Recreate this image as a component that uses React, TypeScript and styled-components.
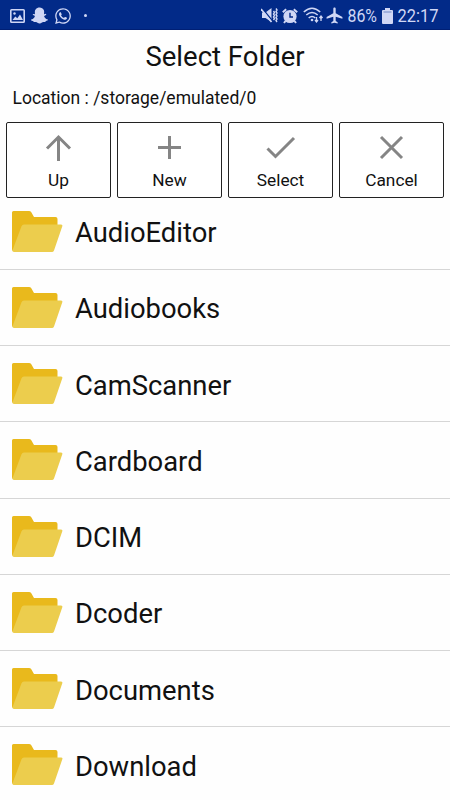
import React from 'react';
import styled, { createGlobalStyle } from 'styled-components';
import { FaSnapchatGhost, FaWhatsapp } from 'react-icons/fa';
import { MdAirplanemodeActive } from 'react-icons/md';

const GlobalStyle = createGlobalStyle`
  * { box-sizing: border-box; }
  body { margin: 0; background: #fff; }
`;

const Screen = styled.div`
  display: flex;
  flex-direction: column;
  width: 450px;
  height: 800px;
  overflow: hidden;
  background: #fefefe;
  color: #111;
  font-family: Roboto, sans-serif;
`;

const StatusBar = styled.header`
  display: flex;
  align-items: center;
  flex: none;
  height: 30px;
  padding: 2px 11px 0 10px;
  background: #022a88;
  border-bottom: 1px solid #001f75;
  color: #d0d7f5;
  svg { display: block; flex: none; }
`;

const Notifications = styled.div`
  display: flex;
  align-items: center;
  gap: 6px;
`;

const Dot = styled.span`
  width: 3px;
  height: 3px;
  margin-left: 6px;
  border-radius: 50%;
  background: currentColor;
`;

const SystemIcons = styled.div`
  display: flex;
  align-items: center;
  margin-left: auto;
`;

const StatusText = styled.svg`
  overflow: visible;
  fill: currentColor;
  font: 400 19px Roboto, sans-serif;
`;

const Title = styled.h1`
  flex: none;
  margin: 0;
  height: 53px;
  line-height: 53px;
  font-size: 27.5px;
  font-weight: 400;
  text-align: center;
`;

const Location = styled.p`
  flex: none;
  margin: 0;
  height: 39px;
  padding-left: 12.5px;
  line-height: 30px;
  font-size: 17.5px;
`;

const Toolbar = styled.nav`
  display: grid;
  grid-template-columns: repeat(4, 1fr);
  gap: 6px;
  flex: none;
  height: 76px;
  padding: 0 6px;
`;

const ToolButton = styled.button`
  display: flex;
  flex-direction: column;
  align-items: center;
  padding: 9px 0 0;
  border: 1px solid #222;
  border-radius: 2px;
  background: #fff;
  color: #111;
  font: 400 17.300px/20px Roboto, sans-serif;
  svg { display: block; margin-bottom: 7px; }
`;

const FolderViewport = styled.main`
  flex: 1;
  min-height: 0;
  overflow: hidden;
`;

const FolderList = styled.ul`
  margin: -4.5px 0 0;
  padding: 0;
  list-style: none;
`;

const FolderRow = styled.li`
  display: flex;
  align-items: center;
  gap: 12px;
  height: 76.25px;
  padding: 1px 0 0 12px;
  border-bottom: 1px solid #d6d6d6;
  font-size: 27.400px;
  line-height: 34px;
`;

const FolderName = styled.span`
  padding-top: 3px;
`;

const FolderIcon = () => (
  <svg width="51" height="42" viewBox="0 0 51 42">
    <path d="M1.5 0H17Q18.500 0 19.300 1.300L22 6H43.500Q45.500 6 45.500 8V20L35 34L1 40Q0 40 0 38V1.500Q0 0 1.500 0Z" fill="#e9b91c" />
    <path d="M12 13.500H49Q51 13.500 50.300 15.300L42 39.500Q41.300 41 40 41H2Q0 41 .6 39L9.500 15.300Q10.200 13.500 12 13.500Z" fill="#eccd4d" />
  </svg>
);

const ImageIcon = () => (
  <svg width="15" height="14" viewBox="0 0 15 14">
    <rect x=".8" y=".8" width="13.400" height="12.400" rx=".8" fill="none" stroke="currentColor" strokeWidth="1.600" />
    <path d="M2.500 11L5.300 7.500L7.300 9.300L10 5.500L13 11Z" fill="currentColor" />
    <circle cx="4.500" cy="4.500" r="1.200" fill="currentColor" />
  </svg>
);

const MuteIcon = () => (
  <svg width="17" height="17" viewBox="0 0 17 17" fill="none" stroke="currentColor">
    <path d="M1 5.500H4.500L10.500 1V15L4.500 11H1Z" fill="currentColor" stroke="none" />
    <path d="M1 1L11.500 14" stroke="#022a88" strokeWidth="1.300" />
    <path d="M0 2L10.500 15" strokeWidth="1.700" />
    <path d="M12.500 4L13.500 5.500L12.500 7L13.500 8.500L12.500 10L13.500 11.500L12.500 13M15 1.500L16 3L15 4.500L16 6L15 7.500L16 9L15 10.500L16 12L15 13.500L16 15" strokeWidth="1.400" />
  </svg>
);

const AlarmIcon = () => (
  <svg width="16" height="16" viewBox="0 0 16 16" fill="none" stroke="currentColor">
    <circle cx="8" cy="8.500" r="6.600" fill="currentColor" stroke="none" />
    <path d="M.8 4.200L4.200 1.200M11.800 1.200L15.200 4.200M3.500 13L2 15M12.500 13L14 15" strokeWidth="2" />
    <path d="M8 4.700V9H11" stroke="#022a88" strokeWidth="1.400" />
  </svg>
);

const WifiIcon = () => (
  <svg width="21" height="17" viewBox="0 0 21 17" fill="none" stroke="currentColor" strokeWidth="1.600">
    <path d="M.8 5Q9 -2.500 17.200 5M3.300 8Q9 3 14.700 8M5.700 11Q9 8 12.300 11" />
    <circle cx="9" cy="13" r="1.300" fill="currentColor" stroke="none" />
    <path d="M13.500 10V15M12 13L13.500 15L15 13M18 14V9M16.500 11L18 9L19.500 11" strokeWidth="1.300" />
  </svg>
);

const BatteryIcon = () => (
  <svg width="11" height="16" viewBox="0 0 11 16" fill="currentColor">
    <path d="M3 0H8V2H10Q11 2 11 3V15Q11 16 10 16H1Q0 16 0 15V3Q0 2 1 2H3Z" />
    <path d="M1.500 4H9.500" stroke="#7188c4" />
  </svg>
);

const actions = [
  { label: 'Up', path: 'M18.500 31V7M7 18.500L18.500 7L30 18.500' },
  { label: 'New', path: 'M18.500 6V29M7 17.500H30' },
  { label: 'Select', path: 'M5.500 18.500L13.500 26.500L32 8' },
  { label: 'Cancel', path: 'M8 7L29 28M29 7L8 28' },
];

const folders = ['AudioEditor', 'Audiobooks', 'CamScanner', 'Cardboard', 'DCIM', 'Dcoder', 'Documents', 'Download'];

export default function App() {
  return (
    <Screen>
      <GlobalStyle />
      <StatusBar>
        <Notifications>
          <ImageIcon />
          <FaSnapchatGhost size={17} />
          <FaWhatsapp size={18} />
          <Dot />
        </Notifications>
        <SystemIcons>
          <MuteIcon />
          <svg width="4" height="1" />
          <AlarmIcon />
          <svg width="5" height="1" />
          <WifiIcon />
          <svg width="1" height="1" />
          <MdAirplanemodeActive size={19} />
          <StatusText width="38" height="20"><text x="3.500" y="16" textLength="29.500" lengthAdjust="spacingAndGlyphs">86%</text></StatusText>
          <BatteryIcon />
          <StatusText width="46" height="20"><text x="4.500" y="16" textLength="41" lengthAdjust="spacingAndGlyphs">22:17</text></StatusText>
        </SystemIcons>
      </StatusBar>
      <Title>Select Folder</Title>
      <Location>Location : /storage/emulated/0</Location>
      <Toolbar>
        {actions.map(({ label, path }) => (
          <ToolButton key={label}>
            <svg width="37" height="31" viewBox="0 2 37 31" fill="none" stroke="#858585" strokeWidth="3">
              <path d={path} />
            </svg>
            {label}
          </ToolButton>
        ))}
      </Toolbar>
      <FolderViewport>
        <FolderList>
          {folders.map((name) => (
            <FolderRow key={name}>
              <FolderIcon />
              <FolderName>{name}</FolderName>
            </FolderRow>
          ))}
        </FolderList>
      </FolderViewport>
    </Screen>
  );
}
